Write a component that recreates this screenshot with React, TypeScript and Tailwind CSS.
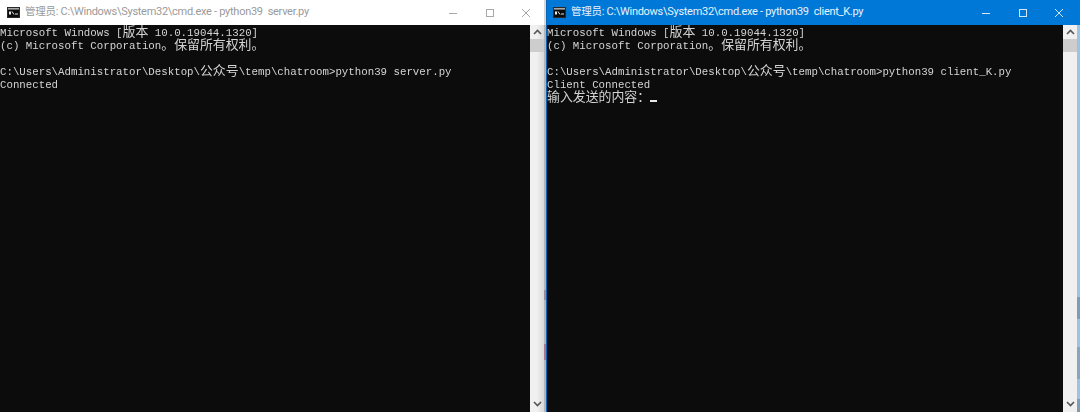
const mono = 'font-["Liberation_Mono",monospace] text-[10.75px] leading-[13px] text-[#d4d4d4] whitespace-pre';
const titleFont = 'font-["Roboto","Noto_Sans_CJK_SC",sans-serif] text-[11px] tracking-[-0.28px]';

function Cjk({ children }: { children: string }) {
  return <span className='text-[12.9px] font-["Noto_Sans_CJK_SC",sans-serif] leading-[0]'>{children}</span>;
}

function Line({ children }: { children?: React.ReactNode }) {
  return <div className="h-[13px]">{children}</div>;
}

function CmdIcon() {
  return (
    <svg width="13" height="11" viewBox="0 0 13 11" className="shrink-0">
      <rect x="0" y="0" width="13" height="11" fill="#2a2a2a" />
      <rect x="1" y="1" width="11" height="1.5" fill="#a8a8a8" />
      <rect x="1" y="3" width="11" height="7" fill="#0c0c0c" />
      <rect x="2" y="4.5" width="2" height="3" fill="#e8e8e8" />
      <path d="M5 4.5l2 3" stroke="#e8e8e8" strokeWidth="1" />
      <rect x="8" y="6.5" width="3" height="1" fill="#e8e8e8" />
    </svg>
  );
}

function Controls({ color }: { color: string }) {
  return (
    <div className="flex items-center shrink-0 gap-[26.5px]">
      <svg width="10" height="10" viewBox="0 0 10 10">
        <path d="M1 5.5h8" stroke={color} strokeWidth="1" />
      </svg>
      <svg width="10" height="10" viewBox="0 0 10 10">
        <rect x="1.5" y="1.5" width="7" height="7" fill="none" stroke={color} strokeWidth="1" />
      </svg>
      <svg width="10" height="10" viewBox="0 0 10 10">
        <path d="M1 1l8 8M9 1l-8 8" stroke={color} strokeWidth="1" fill="none" />
      </svg>
    </div>
  );
}

function Scrollbar({ shaded }: { shaded?: boolean }) {
  return (
    <div className={`w-[14px] shrink-0 flex flex-col items-center ${shaded ? 'bg-gradient-to-r from-[#f0f0f0] from-50% to-[#d8d8d8]' : 'bg-[#f0f0f0]'}`}>
      <div className="h-[14px] flex items-center justify-center">
        <svg width="9" height="6" viewBox="0 0 9 6">
          <path d="M1 5l3.5-3.5L8 5" stroke="#555555" strokeWidth="1.6" fill="none" />
        </svg>
      </div>
      <div className="w-full h-[13px] bg-[#cdcdcd]" />
      <div className="flex-1" />
      <div className="h-[17px] flex items-center justify-center">
        <svg width="9" height="6" viewBox="0 0 9 6">
          <path d="M1 1l3.5 3.5L8 1" stroke="#555555" strokeWidth="1.6" fill="none" />
        </svg>
      </div>
    </div>
  );
}

function Terminal({ shaded, children }: { shaded?: boolean; children: React.ReactNode }) {
  return (
    <div className="flex-1 flex min-h-0">
      <div className={`flex-1 bg-[#0c0c0c] pt-[2px] blur-[0.4px] ${mono}`}>{children}</div>
      <Scrollbar shaded={shaded} />
    </div>
  );
}

export default function App() {
  return (
    <div className="w-[1080px] h-[412px] flex overflow-hidden bg-[#0c0c0c]">
      {/* server window */}
      <div className="w-[544px] shrink-0 flex flex-col">
        <div className={`h-[25px] bg-white flex items-center pl-[7px] pr-[13px] ${titleFont} text-[#9a9a9a]`}>
          <CmdIcon />
          <span className="ml-[5px] flex-1 whitespace-pre"><span className="text-[10.5px]">管理员</span>: C:\Windows\System32\cmd.exe - python39  server.py</span>
          <Controls color="#a8a8a8" />
        </div>
        <Terminal shaded>
          <Line>Microsoft Windows [<Cjk>版本</Cjk> 10.0.19044.1320]</Line>
          <Line>(c) Microsoft Corporation<Cjk>。保留所有权利。</Cjk></Line>
          <Line />
          <Line>C:\Users\Administrator\Desktop\<Cjk>公众号</Cjk>\temp\chatroom&gt;python39 server.py</Line>
          <Line>Connected</Line>
        </Terminal>
      </div>
      {/* sliver of the desktop between the windows */}
      <div className="w-[2px] shrink-0 bg-[#b4b4b4] flex flex-col">
        <div className="h-[25px] bg-[#d8d8d8]" />
        <div className="h-[265px]" />
        <div className="h-[10px] bg-[#a08a98]" />
        <div className="h-[44px]" />
        <div className="h-[16px] bg-[#a8788c]" />
      </div>
      {/* client window */}
      <div className="flex-1 flex flex-col border-l border-[#0a66b8]">
        <div className={`h-[25px] bg-[#0078d7] flex items-center pl-[6px] pr-[16px] ${titleFont} text-[#e8f2fb]`}>
          <CmdIcon />
          <span className="ml-[5px] flex-1 whitespace-pre"><span className="text-[10.5px]">管理员</span>: C:\Windows\System32\cmd.exe - python39  client_K.py</span>
          <Controls color="#d6e8f7" />
        </div>
        <div className="flex-1 flex min-h-0">
          <Terminal>
            <Line>Microsoft Windows [<Cjk>版本</Cjk> 10.0.19044.1320]</Line>
            <Line>(c) Microsoft Corporation<Cjk>。保留所有权利。</Cjk></Line>
            <Line />
            <Line>C:\Users\Administrator\Desktop\<Cjk>公众号</Cjk>\temp\chatroom&gt;python39 client_K.py</Line>
            <Line>Client Connected</Line>
            <Line>
              <Cjk>输入发送的内容：</Cjk>
              <span className="inline-block translate-y-[1px] w-[7px] h-[2px] bg-[#e8e8e8]" />
            </Line>
          </Terminal>
          <div className="w-[3px] shrink-0 bg-[#9cc3e6] flex flex-col">
            <div className="h-[272px]" />
            <div className="h-[22px] bg-[#7f9bb5]" />
            <div className="h-[28px]" />
            <div className="h-[32px] bg-[#8aa4bc]" />
            <div className="h-[20px]" />
            <div className="h-[13px] bg-[#7f9bb5]" />
          </div>
        </div>
      </div>
    </div>
  );
}
